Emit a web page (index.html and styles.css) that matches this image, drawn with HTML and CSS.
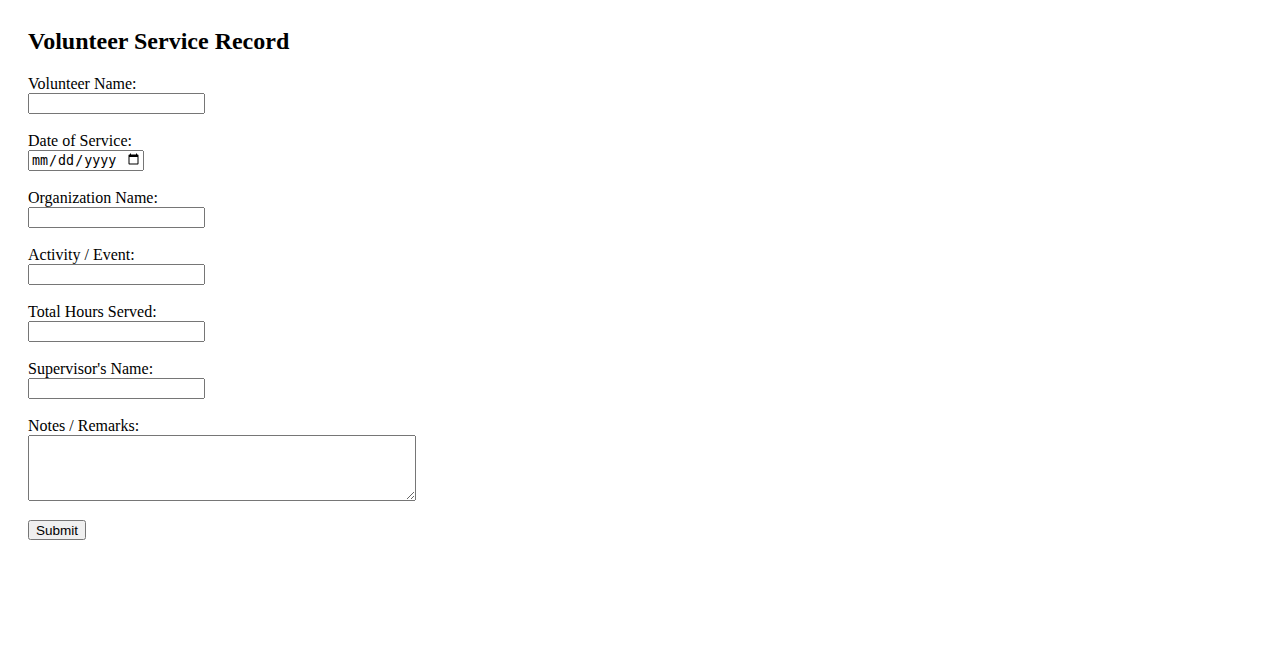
FILE: index.html
```html
<!DOCTYPE html>
<html lang="en">
<head>
    <meta charset="UTF-8">
    <meta name="viewport" content="width=device-width, initial-scale=1.0">
    <title>Volunteer Service Record</title>
    <link rel="stylesheet" href="styles.css">
</head>
<body>

    <!-- Form -->
    <div class="container">
        <h2>Volunteer Service Record</h2>

        <form id="recordForm">
            <div class="field">
                <label for="volunteerName">Volunteer Name:</label>
                <input type="text" id="volunteerName" name="volunteerName">
            </div>

            <div class="field">
                <label for="serviceDate">Date of Service:</label>
                <input type="date" id="serviceDate" name="serviceDate" class="date-input">
            </div>

            <div class="field">
                <label for="orgName">Organization Name:</label>
                <input type="text" id="orgName" name="orgName">
            </div>

            <div class="field">
                <label for="activity">Activity / Event:</label>
                <input type="text" id="activity" name="activity">
            </div>

            <div class="field">
                <label for="hours">Total Hours Served:</label>
                <input type="number" id="hours" name="hours">
            </div>

            <div class="field">
                <label for="supervisor">Supervisor's Name:</label>
                <input type="text" id="supervisor" name="supervisor">
            </div>

            <div class="field">
                <label for="notes">Notes / Remarks:</label>
                <textarea id="notes" name="notes" rows="4"></textarea>
            </div>

            <button type="submit" class="submit-btn">Submit</button>
        </form>
    </div>

</body>
</html>
```

FILE: styles.css
```css
/* Page */
body {
    margin: 8px;
    font-family: 'Liberation Serif', 'Times New Roman', serif;
    font-size: 16px;
    color: black;
    background: white;
}

.container {
    padding: 20px;
}

.container h2 {
    font-size: 24px;
    margin-top: 0;
    margin-bottom: 19.5px;
}

/* Fields */
.field {
    margin-bottom: 18px;
}

.field label {
    display: block;
    line-height: 18px;
}

.field input,
.field textarea {
    display: block;
    box-sizing: border-box;
}

.field input {
    width: 177px;
    height: 21px;
}

.field .date-input {
    width: 116px;
}

.field textarea {
    width: 388px;
    height: 66px;
}

/* Submit */
.submit-btn {
    margin-top: 1px;
    height: 20px;
    padding: 1px 6px;
    font-family: 'Liberation Sans', Arial, sans-serif;
    font-size: 13.5px;
}
```
